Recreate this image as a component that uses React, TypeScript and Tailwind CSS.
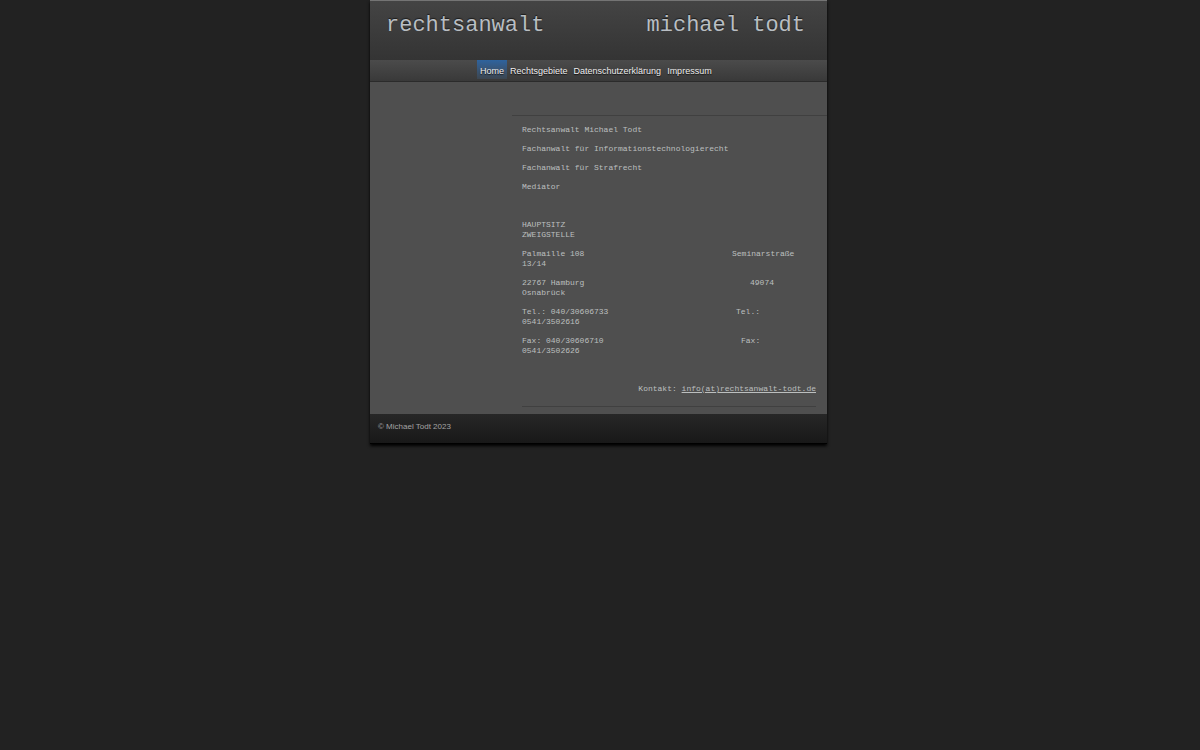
interface Office {
	main: string
	branch: string
	rest: string
	column: string
}

const navItems = ['Home', 'Rechtsgebiete', 'Datenschutzerklärung', 'Impressum']

const intro = [
	'Rechtsanwalt Michael Todt',
	'Fachanwalt für Informationstechnologierecht',
	'Fachanwalt für Strafrecht',
	'Mediator',
]

const offices: Office[] = [
	{ main: 'Palmaille 108', branch: 'Seminarstraße', rest: '13/14', column: 'w-[210px]' },
	{ main: '22767 Hamburg', branch: '49074', rest: 'Osnabrück', column: 'w-[228px]' },
	{ main: 'Tel.: 040/30606733', branch: 'Tel.:', rest: '0541/3502616', column: 'w-[214px]' },
	{ main: 'Fax: 040/30606710', branch: 'Fax:', rest: '0541/3502626', column: 'w-[219px]' },
]

const Header = () => (
	<header className="border-t border-[#747474] bg-gradient-to-b from-[#444444] to-[#343434] pt-[9px] pr-[22px] pb-[19px] pl-4">
		<h1 className="flex flex-wrap justify-between font-['Liberation_Mono',monospace] text-[22px] leading-[31px] text-[#b9bec3] [text-shadow:0_-1px_1px_#1c1c1c]">
			<span>rechtsanwalt</span>
			<span>michael todt</span>
		</h1>
	</header>
)

const Nav = () => (
	<nav className="border-b border-[#2b2b2b] bg-gradient-to-b from-[#4b4b4b] to-[#393939]">
		<ul className="flex flex-wrap pb-[2px] pl-[107px]">
			{navItems.map((item, i) => (
				<li key={item}>
					<a
						href="#"
						className={`block px-[3px] pt-[3px] text-[9px] leading-4 text-[#eeeeee] [text-shadow:0_1px_1px_#111111] ${
							i === 0 ? 'bg-gradient-to-b from-[#2e639e] to-[#3c4650]' : ''
						}`}
					>
						{item}
					</a>
				</li>
			))}
		</ul>
	</nav>
)

const Content = () => (
	<main className="bg-[#4f4f4f] pt-[33px] pb-[7px] pl-[142px] font-['Liberation_Mono',monospace] text-[8px] leading-[10px] text-[#bcbfbf]">
		<hr className="border-[#404040]" />
		<div className="space-y-[9px] pt-[9px] pr-[11px] pl-[10px]">
			{intro.map((line) => (
				<p key={line}>{line}</p>
			))}
			<p>&nbsp;</p>
			<p>
				HAUPTSITZ
				<br />
				ZWEIGSTELLE
			</p>
			{offices.map((office) => (
				<p key={office.main}>
					<span className={`inline-block align-top ${office.column}`}>{office.main}</span>
					{office.branch}
					<br />
					{office.rest}
				</p>
			))}
			<p>&nbsp;</p>
			<p className="text-right">
				Kontakt:{' '}
				<a href="mailto:info(at)rechtsanwalt-todt.de" className="underline">
					info(at)rechtsanwalt-todt.de
				</a>
			</p>
			<hr className="mt-3 border-[#404040]" />
		</div>
	</main>
)

export default function App() {
	return (
		<div className="min-h-screen bg-[#222222] pr-[3px] font-['Liberation_Sans',sans-serif]">
			<div className="mx-auto w-full max-w-[457px] shadow-[0_2px_3px_#000000]">
				<Header />
				<Nav />
				<Content />
				<footer className="border-b border-black bg-gradient-to-b from-[#272727] to-[#181818] px-2 pt-[5px] pb-2 text-[8px] leading-4 text-[#a3a3a3]">
					© Michael Todt 2023
				</footer>
			</div>
		</div>
	)
}
